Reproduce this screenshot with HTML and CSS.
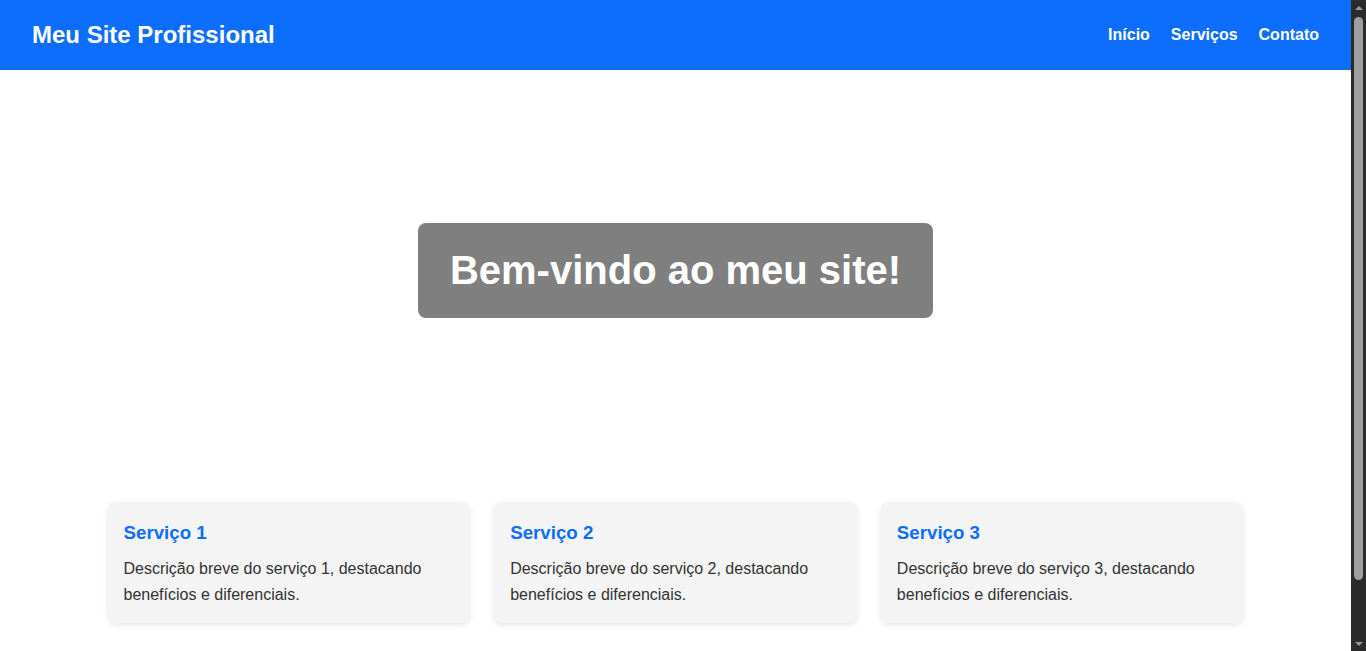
FILE: index.html
```html
<!DOCTYPE html>
<html lang="pt-BR">
<head>
<meta charset="UTF-8">
<title>Meu Site Profissional</title>
<link rel="stylesheet" href="styles.css">
</head>
<body>
<div class="page">
  <header class="site-header">
    <h1 class="brand">Meu Site Profissional</h1>
    <nav class="nav">
      <a href="#inicio">Início</a>
      <a href="#servicos">Serviços</a>
      <a href="#contato">Contato</a>
    </nav>
  </header>
  <section class="hero" id="inicio">
    <h2 class="hero-title">Bem-vindo ao meu site!</h2>
  </section>
  <section class="services" id="servicos">
    <div class="card">
      <h3>Serviço 1</h3>
      <p>Descrição breve do serviço 1, destacando benefícios e diferenciais.</p>
    </div>
    <div class="card">
      <h3>Serviço 2</h3>
      <p>Descrição breve do serviço 2, destacando benefícios e diferenciais.</p>
    </div>
    <div class="card">
      <h3>Serviço 3</h3>
      <p>Descrição breve do serviço 3, destacando benefícios e diferenciais.</p>
    </div>
  </section>
  <footer class="site-footer" id="contato"></footer>
</div>
<div class="scrollbar" aria-hidden="true">
  <div class="sb-btn"><span class="arrow-up"></span></div>
  <div class="sb-track"><div class="sb-thumb"></div></div>
  <div class="sb-btn"><span class="arrow-down"></span></div>
</div>
</body>
</html>
```
FILE: styles.css
```css
* { box-sizing: border-box; }

html, body {
  margin: 0;
  height: 100%;
  overflow: hidden;
}

body {
  display: flex;
  font-family: "Liberation Sans", Arial, sans-serif;
  color: #333;
  background: #fff;
}

.page {
  flex: 1;
  min-width: 0;
}

/* vertical scrollbar strip */
.scrollbar {
  width: 15px;
  height: 100vh;
  flex: none;
  display: flex;
  flex-direction: column;
  background: #2b2b2b;
}

.sb-btn {
  height: 17px;
  display: flex;
  align-items: center;
  justify-content: center;
  flex: none;
}

.arrow-up {
  width: 0;
  height: 0;
  border-left: 4px solid transparent;
  border-right: 4px solid transparent;
  border-bottom: 4px solid #9a9a9a;
  margin-top: -2px;
}

.arrow-down {
  width: 0;
  height: 0;
  border-left: 4px solid transparent;
  border-right: 4px solid transparent;
  border-top: 4px solid #9a9a9a;
  margin-top: 2px;
}

.sb-track {
  flex: 1;
  padding: 0 3px;
}

.sb-thumb {
  height: 563px;
  background: #9f9f9f;
  border-radius: 5px;
}

.site-header {
  display: flex;
  justify-content: space-between;
  align-items: center;
  height: 70px;
  padding: 0 32px;
  background: #0d6efd;
  color: #fff;
}

.brand {
  margin: 0;
  font-size: 24px;
  font-weight: bold;
}

.nav {
  display: flex;
  gap: 21px;
}

.nav a {
  color: #fff;
  text-decoration: none;
  font-weight: bold;
  font-size: 16px;
}

.hero {
  height: 400px;
  display: flex;
  align-items: center;
  justify-content: center;
}

.hero-title {
  margin: 0;
  padding: 24px 32px;
  background: rgba(0, 0, 0, 0.5);
  color: #fff;
  font-size: 40px;
  line-height: 47px;
  font-weight: bold;
  border-radius: 8px;
}

.services {
  max-width: 1200px;
  margin: 0 auto;
  padding: 32px;
  display: grid;
  grid-template-columns: repeat(3, 1fr);
  gap: 24px;
}

.card {
  background: #f4f4f4;
  padding: 20px 16px 16px;
  border-radius: 8px;
  box-shadow: 0 2px 6px rgba(0, 0, 0, 0.1);
}

.card h3 {
  margin: 0 0 12px;
  font-size: 18.72px;
  color: #0d6efd;
}

.card p {
  margin: 0;
  font-size: 16px;
  line-height: 1.6;
}

.site-footer {
  height: 60px;
}
```
